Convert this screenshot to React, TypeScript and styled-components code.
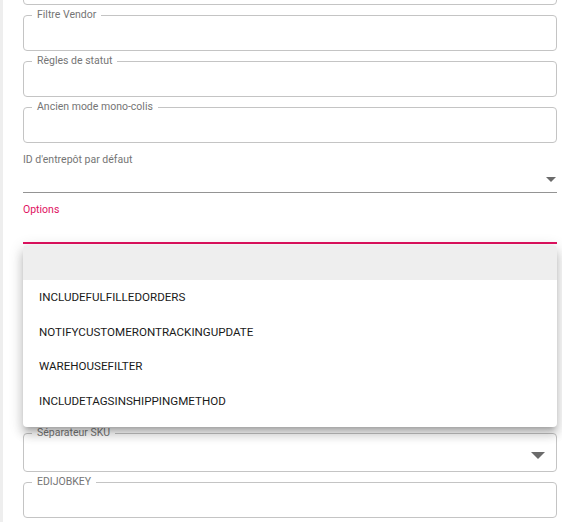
import React from 'react';
import styled, { createGlobalStyle } from 'styled-components';

const Global = createGlobalStyle`
  html, body { margin: 0; padding: 0; background: #ffffff; }
  body { font-family: Roboto, "Noto Sans", Arial, sans-serif; overflow: hidden; }
  * { box-sizing: content-box; }
`;

const PINK = '#e0115f';

const Page = styled.div`
  height: 522px;
  overflow: hidden;
  display: flex;
`;

const Rail = styled.div`
  flex: none;
  width: 3px;
  background: #eeeeee;
`;

const Form = styled.div`
  flex: 1;
  display: flex;
  flex-direction: column;
  padding: 0 5px 0 20px;
  min-width: 0;
`;

const Outline = styled.fieldset<{ $gap: number }>`
  margin: ${(p) => p.$gap}px 0 0;
  padding: 0 8px;
  border: 1px solid #c4c4c4;
  border-radius: 4px;
  min-width: 0;
`;

const Legend = styled.legend`
  padding: 0 5px;
  margin: 0;
  font-size: 10.5px;
  line-height: 12px;
  color: #757575;
  white-space: nowrap;
`;

const OutlineBody = styled.div<{ $h: number }>`
  height: ${(p) => p.$h}px;
  display: flex;
  align-items: center;
  justify-content: flex-end;
  padding-right: 3px;
`;

const Standard = styled.div`
  margin-top: 10px;
  display: flex;
  flex-direction: column;
  position: relative;
`;

const StdLabel = styled.label<{ $focused?: boolean }>`
  font-size: 10.5px;
  line-height: 14px;
  color: ${(p) => (p.$focused ? PINK : '#757575')};
`;

const StdInput = styled.div<{ $focused?: boolean }>`
  height: 25px;
  border-bottom: ${(p) => (p.$focused ? `2px solid ${PINK}` : '1px solid #949494')};
  display: flex;
  align-items: center;
  justify-content: flex-end;
  padding-right: 1px;
`;

const Menu = styled.ul`
  position: absolute;
  top: 100%;
  left: 0;
  right: 0;
  margin: 1px 0 0;
  padding: 0 0 9px;
  list-style: none;
  background: #ffffff;
  border-radius: 4px;
  z-index: 10;
  box-shadow: 0px 5px 5px -3px rgba(0, 0, 0, 0.2), 0px 8px 10px 1px rgba(0, 0, 0, 0.14),
    0px 3px 14px 2px rgba(0, 0, 0, 0.12);
`;

const MenuItem = styled.li<{ $selected?: boolean; $h: number }>`
  height: ${(p) => p.$h}px;
  display: flex;
  align-items: center;
  padding: 0 16px;
  font-size: 11.6px;
  color: #1a1a1a;
  background: ${(p) => (p.$selected ? '#eeeeee' : '#ffffff')};
  border-radius: ${(p) => (p.$selected ? '4px 4px 0 0' : '0')};
`;

const Arrow = ({ w, h }: { w: number; h: number }) => (
  <svg width={w} height={h} viewBox={`0 0 ${w} ${h}`} style={{ display: 'block' }}>
    <polygon points={`0,0 ${w},0 ${w / 2},${h}`} fill="#6b6b6b" />
  </svg>
);

const options = [
  'INCLUDEFULFILLEDORDERS',
  'NOTIFYCUSTOMERONTRACKINGUPDATE',
  'WAREHOUSEFILTER',
  'INCLUDETAGSINSHIPPINGMETHOD',
];

const fields = ['Filtre Vendor', 'Règles de statut', 'Ancien mode mono-colis'];

export default function App() {
  return (
    <>
      <Global />
      <Page>
        <Rail />
        <Form>
          <Outline $gap={-26}>
            <OutlineBody $h={29} />
          </Outline>
          {fields.map((f) => (
            <Outline key={f} $gap={4}>
              <Legend>{f}</Legend>
              <OutlineBody $h={29} />
            </Outline>
          ))}
          <Standard>
            <StdLabel>ID d'entrepôt par défaut</StdLabel>
            <StdInput>
              <Arrow w={10} h={5} />
            </StdInput>
          </Standard>
          <Standard>
            <StdLabel $focused>Options</StdLabel>
            <StdInput $focused />
            <Menu>
              <MenuItem $selected $h={35} />
              {options.map((o) => (
                <MenuItem key={o} $h={34.5}>
                  {o}
                </MenuItem>
              ))}
            </Menu>
          </Standard>
          <Outline $gap={183}>
            <Legend>Séparateur SKU</Legend>
            <OutlineBody $h={32}>
              <Arrow w={14} h={7} />
            </OutlineBody>
          </Outline>
          <Outline $gap={4}>
            <Legend>EDIJOBKEY</Legend>
            <OutlineBody $h={29} />
          </Outline>
        </Form>
      </Page>
    </>
  );
}
